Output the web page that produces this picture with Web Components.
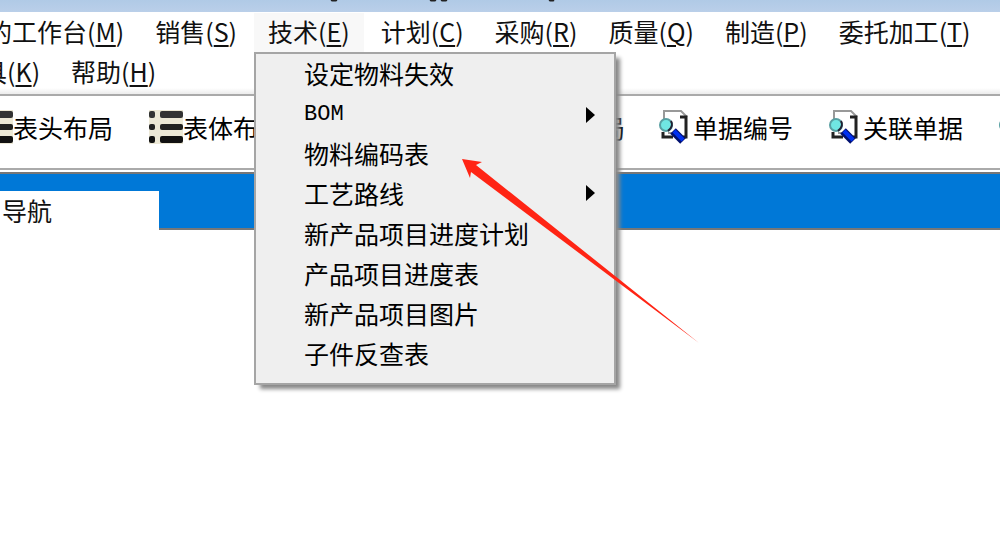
<!DOCTYPE html>
<html lang="zh-CN">
<head>
<meta charset="utf-8">
<title>ERP</title>
<style>
html,body{margin:0;height:100%;background:#fff}
body{font:25px/32px "Noto Sans CJK SC","Noto Sans",sans-serif;color:#111;overflow:hidden}
</style>
</head>
<body>
<erp-app>
  <title-bar></title-bar>
  <menu-bar>
    <menu-row>
      <menu-item key="M">我的工作台</menu-item>
      <menu-item key="S">销售</menu-item>
      <menu-item key="E" open>技术<drop-menu slot="menu">
          <menu-entry>设定物料失效</menu-entry>
          <menu-entry latin more>BOM</menu-entry>
          <menu-entry>物料编码表</menu-entry>
          <menu-entry more>工艺路线</menu-entry>
          <menu-entry>新产品项目进度计划</menu-entry>
          <menu-entry>产品项目进度表</menu-entry>
          <menu-entry>新产品项目图片</menu-entry>
          <menu-entry>子件反查表</menu-entry>
        </drop-menu></menu-item>
      <menu-item key="C">计划</menu-item>
      <menu-item key="R">采购</menu-item>
      <menu-item key="Q">质量</menu-item>
      <menu-item key="P">制造</menu-item>
      <menu-item key="T">委托加工</menu-item>
    </menu-row>
    <menu-row second>
      <menu-item key="K">工具</menu-item>
      <menu-item key="H">帮助</menu-item>
    </menu-row>
  </menu-bar>
  <tool-bar>
    <tool-button icon="list">表头布局</tool-button>
    <tool-button icon="list">表体布局</tool-button>
    <tool-button wide>局</tool-button>
    <tool-button icon="find">单据编号</tool-button>
    <tool-button icon="find">关联单据</tool-button>
    <tool-button icon="find"></tool-button>
  </tool-bar>
  <tab-strip>导航</tab-strip>
  <pointer-arrow></pointer-arrow>
</erp-app>
<script>
function define(name, html, setup) {
  customElements.define(name, class extends HTMLElement {
    connectedCallback() {
      if (this.shadowRoot) return;
      const root = this.attachShadow({mode: "open"});
      root.innerHTML = html;
      if (setup) setup(this, root);
    }
  });
}

define("erp-app", `<style>
:host{display:flex;flex-direction:column;position:relative;min-height:100%;overflow:hidden}
</style><slot></slot>`);

define("title-bar", `<style>
:host{display:block;height:12px;background:linear-gradient(#b0cae6,#bacfe9)}
svg{display:block}
</style><svg width="600" height="12" aria-hidden="true"><g fill="none" stroke="#222" stroke-width="2"><path d="M331 0q3 1 6 0M430 0q3 1 6 0M441 0q3 1 6 0M549 0q3 1 5 0"/></g></svg>`);

define("menu-bar", `<style>
:host{display:block;border-bottom:2px solid #aaa;background:linear-gradient(#fff 76px,#ececec);padding:1px 0;}
</style><nav><slot></slot></nav>`);

define("menu-row", `<style>
:host{display:flex;gap:3px;margin-left:-52px}
:host([second]){margin-left:-57px}
</style><slot></slot>`);

define("menu-item", `<style>
:host{display:block;position:relative;flex:none}
button{font:inherit;color:inherit;border:0;background:none;margin:0;padding:2px 14px 6px;height:40px;display:block;white-space:nowrap}
:host([open]) button{background:#f8f8f8}
u{text-decoration-thickness:2px;text-underline-offset:3px}
</style><button type="button"><slot></slot>(<u></u>)</button><slot name="menu"></slot>`, (el, root) => {
  root.querySelector("u").textContent = el.getAttribute("key");
});

define("drop-menu", `<style>
:host{display:block;position:absolute;z-index:2;left:0;top:39px;width:358px;padding:0 0 9px;border:2px solid #a5a5a5;background:#efefef;box-shadow:5px 5px 4px -1px #888}
</style><div role="menu"><slot></slot></div>`);

define("menu-entry", `<style>
:host{display:block}
button{font:inherit;color:#000;border:0;background:none;width:100%;height:40px;padding:0 19px 2px 48px;display:flex;align-items:center;justify-content:space-between}
:host([latin]) button{font-family:"Liberation Mono",monospace;font-size:22px;padding-top:4px}
svg{display:none}
:host([more]) svg{display:block}
</style><button type="button" role="menuitem"><span><slot></slot></span><svg width="9" height="16" aria-hidden="true"><path d="M0 0L9 8L0 16z" fill="#000"/></svg></button>`);

define("tool-bar", `<style>
:host{display:flex;gap:34px;height:72px;margin-left:-21px;align-items:flex-start;border-bottom:2px solid #aaa;box-sizing:content-box}
</style><slot></slot>`);

const icons = {
  list: `<svg width="34" height="34" viewBox="0 0 34 34"><path fill="#ece8d6" d="M0 0h34v34H0z"/><g fill="#333"><rect y="1" width="6" height="7" rx="2"/><rect x="11" y="1" width="23" height="7" rx="2"/></g><g fill="#222"><rect y="14" width="6" height="6" rx="2"/><rect x="11" y="14" width="23" height="6" rx="2"/></g><g fill="#111"><rect y="26" width="6" height="7" rx="2"/><rect x="11" y="26" width="23" height="7" rx="2"/></g></svg>`,
  find: `<svg width="34" height="34" viewBox="0 0 34 34"><path d="M5 10V1h17l6 6" fill="#fff" stroke="#999" stroke-width="2"/><path d="M21 7h6v20h-3M4 22v5h10" fill="none" stroke="#222" stroke-width="3"/><path d="M9 23h6" stroke="#999" stroke-width="2"/><circle cx="7" cy="15" r="6" fill="#70e6e2" stroke="#589fa2" stroke-width="2"/><path d="M12 11q3 5-3 10" fill="none" stroke="#223" stroke-width="2"/><path d="M14 21l10 10" stroke="#001070" stroke-width="8"/><path d="M15 21l9 9" stroke="#0030f0" stroke-width="4"/></svg>`
};
define("tool-button", `<style>
:host{display:block;flex:none}
button{font:inherit;color:#000;border:0;background:none;margin:0;padding:0;height:62px;width:136px;display:flex;align-items:center;white-space:nowrap}
:host([wide]) button{width:306px;justify-content:flex-end}
svg{display:block;flex:none}
</style><button type="button"><i></i><slot></slot></button>`, (el, root) => {
  root.querySelector("i").innerHTML = icons[el.getAttribute("icon")] || "";
});

define("tab-strip", `<style>
:host{display:block;margin-top:2px;background:#0078d7;border-top:2px solid #777;border-bottom:2px solid #777;height:54px}
button{font:inherit;color:#111;border:0;background:#fff;margin:17px 0 0;padding:0 0 2px 2px;height:39px;width:159px;display:block;text-align:left}
</style><div role="tablist"><button type="button" role="tab" aria-selected="true"><slot></slot></button></div>`);

define("pointer-arrow", `<style>
:host{display:block;position:absolute;z-index:3;left:462px;top:159px;pointer-events:none}
svg{display:block}
</style><svg width="237" height="184" aria-hidden="true"><path fill="#ff2414" d="M0 0L20 3L14 6L237 184L9 13L8 19z"/></svg>`);
</script>
</body>
</html>
